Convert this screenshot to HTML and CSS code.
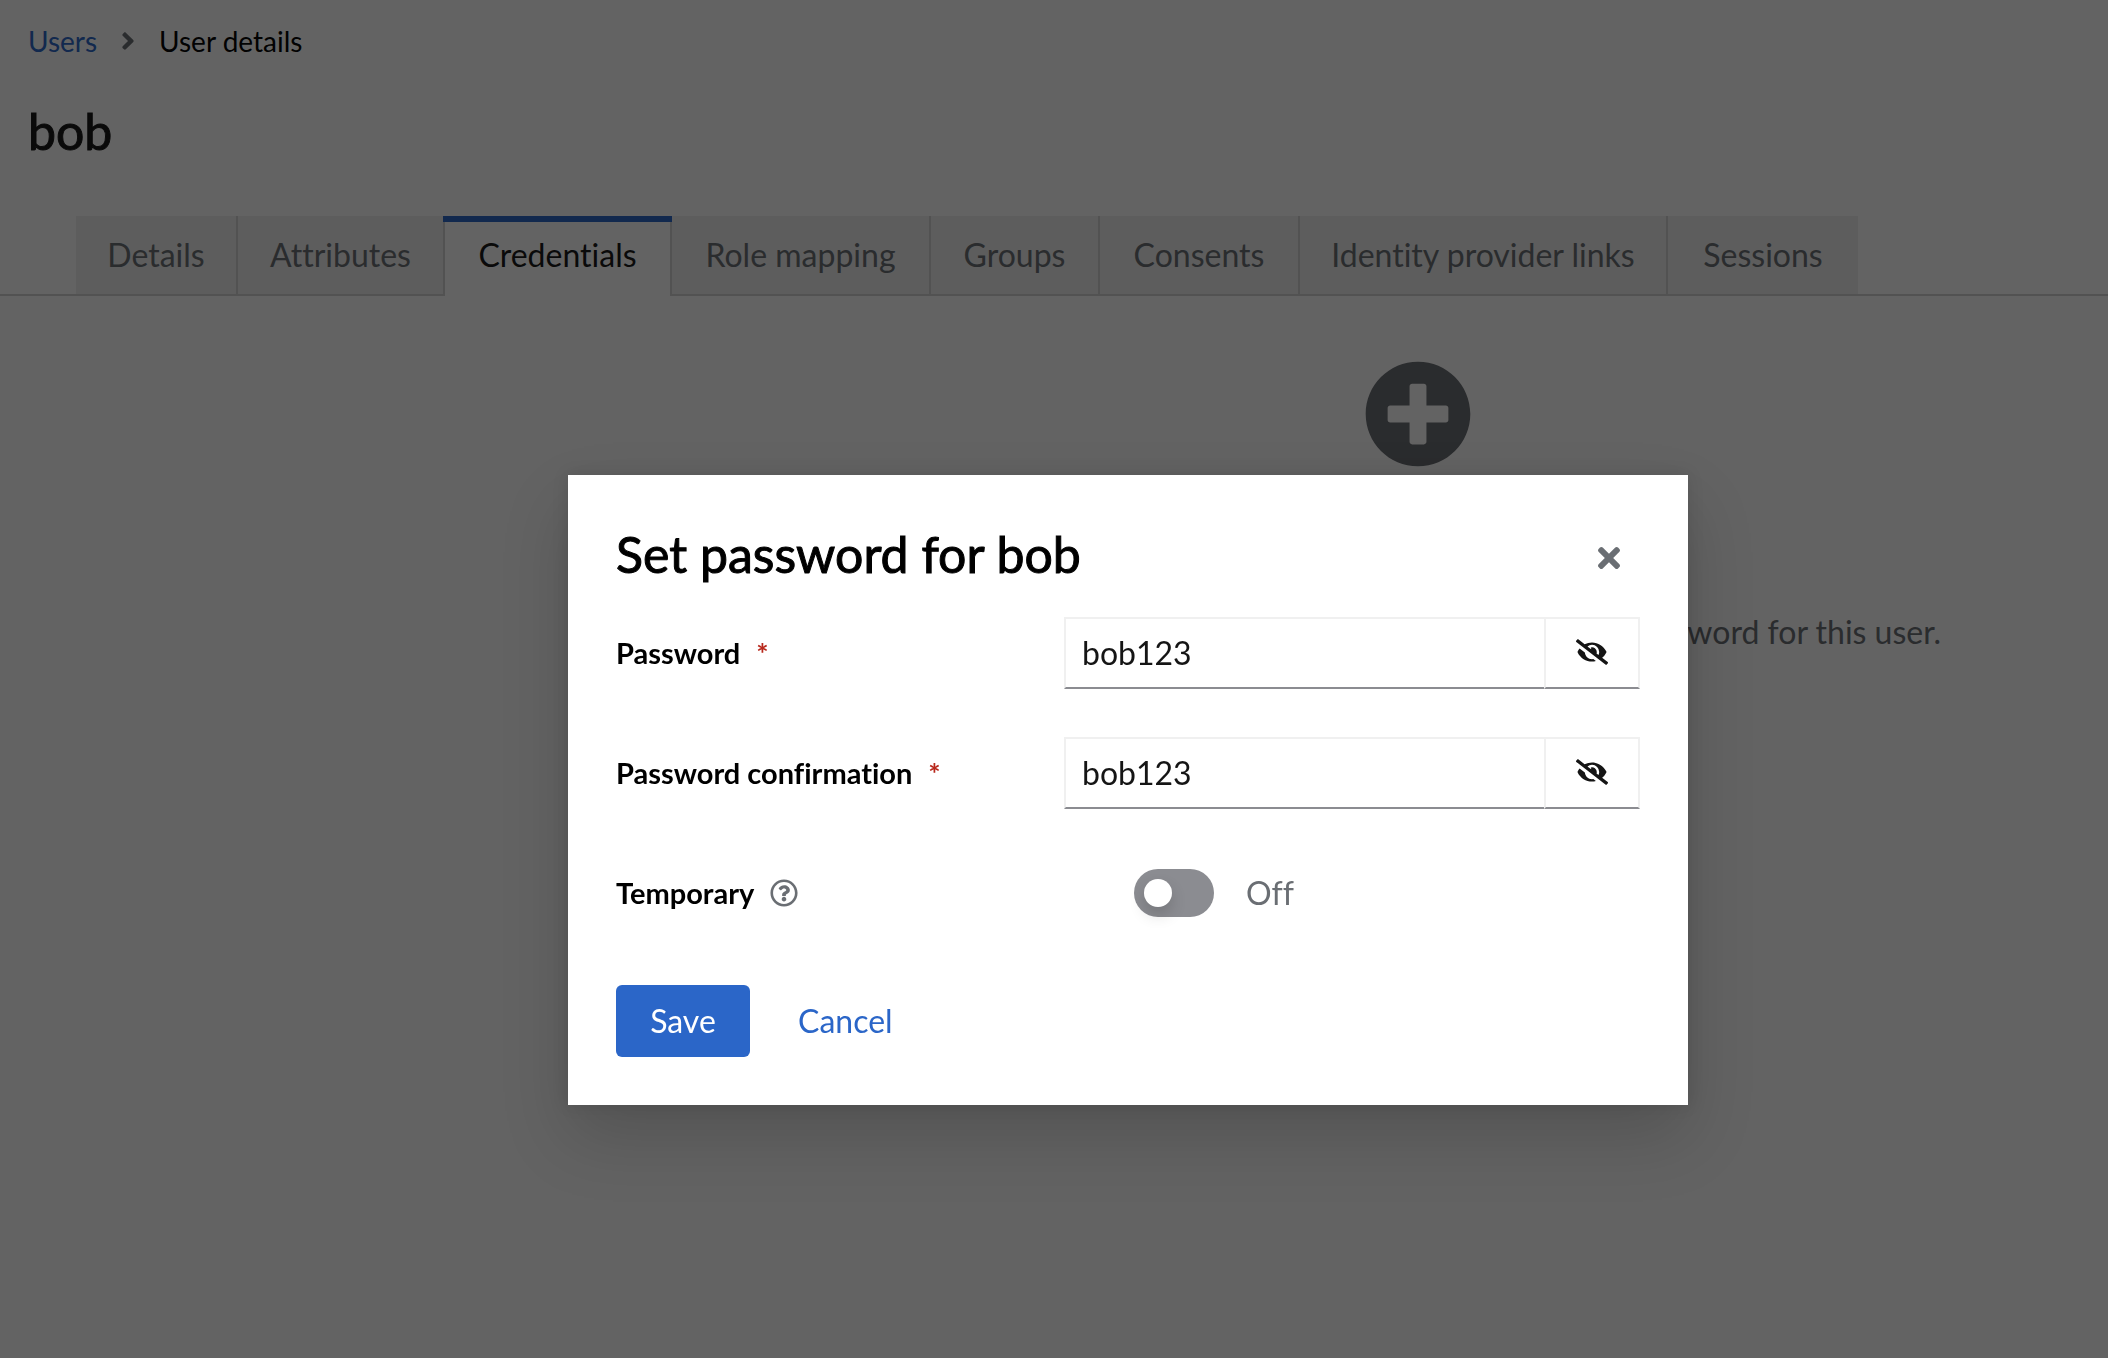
FILE: index.html
```html
<!DOCTYPE html>
<html lang="en">
<head>
<meta charset="utf-8">
<title>User details</title>
<link rel="stylesheet" href="styles.css">
</head>
<body>
<main class="page">
  <nav class="breadcrumb" aria-label="Breadcrumb">
    <a class="breadcrumb-link" href="#users">Users</a>
    <svg class="breadcrumb-divider" viewBox="0 0 256 512" aria-hidden="true"><path d="M224.3 273l-136 136c-9.4 9.4-24.6 9.4-33.9 0l-22.6-22.6c-9.4-9.4-9.4-24.6 0-33.9l96.4-96.4-96.4-96.4c-9.4-9.4-9.4-24.6 0-33.9L54.3 103c9.4-9.4 24.6-9.4 33.9 0l136 136c9.5 9.4 9.5 24.6.1 34z"/></svg>
    <span class="breadcrumb-current" aria-current="page">User details</span>
  </nav>
  <h1 class="page-title">bob</h1>
  <div class="tabs" role="tablist">
    <button class="tab" type="button" role="tab">Details</button>
    <button class="tab tab-before-current" type="button" role="tab">Attributes</button>
    <button class="tab tab-current" type="button" role="tab" aria-selected="true">Credentials</button>
    <button class="tab" type="button" role="tab">Role mapping</button>
    <button class="tab" type="button" role="tab">Groups</button>
    <button class="tab" type="button" role="tab">Consents</button>
    <button class="tab" type="button" role="tab">Identity provider links</button>
    <button class="tab tab-last" type="button" role="tab">Sessions</button>
  </div>
  <section class="empty-state">
    <svg class="empty-icon" viewBox="0 0 512 512" aria-hidden="true"><path d="M256 8C119 8 8 119 8 256s111 248 248 248 248-111 248-248S393 8 256 8zm144 276c0 6.6-5.4 12-12 12h-92v92c0 6.6-5.4 12-12 12h-56c-6.6 0-12-5.4-12-12v-92h-92c-6.6 0-12-5.4-12-12v-56c0-6.6 5.4-12 12-12h92v-92c0-6.6 5.4-12 12-12h56c6.6 0 12 5.4 12 12v92h92c6.6 0 12 5.4 12 12v56z"/></svg>
    <p class="empty-text">This user does not have any credentials. You can set password for this user.</p>
  </section>
</main>

<div class="backdrop">
  <div class="modal" role="dialog" aria-modal="true" aria-labelledby="modal-title">
    <header class="modal-header">
      <h2 class="modal-title" id="modal-title">Set password for bob</h2>
      <button class="close" type="button" aria-label="Close">
        <svg class="close-icon" viewBox="0 0 352 512" aria-hidden="true"><path d="M242.72 256l100.07-100.07c12.28-12.28 12.28-32.19 0-44.48l-22.24-22.24c-12.28-12.28-32.19-12.28-44.48 0L176 189.28 75.93 89.21c-12.28-12.28-32.19-12.28-44.48 0L9.21 111.45c-12.28 12.28-12.28 32.19 0 44.48L109.28 256 9.21 356.07c-12.28 12.28-12.28 32.19 0 44.48l22.24 22.24c12.28 12.28 32.2 12.28 44.48 0L176 322.72l100.07 100.07c12.28 12.28 32.2 12.28 44.48 0l22.24-22.24c12.28-12.28 12.28-32.19 0-44.48L242.72 256z"/></svg>
      </button>
    </header>
    <form class="form">
      <div class="row">
        <label class="label" for="password">Password<span class="required" aria-hidden="true">*</span></label>
        <div class="input-group">
          <input class="input" id="password" type="text" value="bob123" required>
          <button class="toggle-visibility" type="button" aria-label="Hide password">
            <svg class="eye" viewBox="0 0 640 512" aria-hidden="true"><path d="M320 400c-75.85 0-137.25-58.71-142.9-133.11L72.2 185.82c-13.79 17.3-26.48 35.59-36.72 55.59a32.35 32.35 0 0 0 0 29.19C89.71 376.41 197.07 448 320 448c26.91 0 52.87-4 77.89-10.46L346 397.39a144.13 144.13 0 0 1-26 2.61zm313.82 58.1l-110.55-85.44a331.25 331.25 0 0 0 81.25-102.07 32.35 32.35 0 0 0 0-29.19C550.29 135.59 442.93 64 320 64a308.15 308.15 0 0 0-147.32 37.7L45.46 3.37A16 16 0 0 0 23 6.18L3.37 31.45A16 16 0 0 0 6.18 53.9l588.36 454.73a16 16 0 0 0 22.46-2.81l19.64-25.27a16 16 0 0 0-2.82-22.45zm-183.72-142l-39.3-30.38A94.75 94.75 0 0 0 416 256a94.76 94.76 0 0 0-121.31-92.21A47.65 47.65 0 0 1 304 192a46.64 46.64 0 0 1-1.54 10l-73.61-56.89A142.31 142.31 0 0 1 320 112a143.92 143.92 0 0 1 144 144c0 21.63-5.29 41.79-13.9 60.11z"/></svg>
          </button>
        </div>
      </div>
      <div class="row">
        <label class="label" for="confirmation">Password confirmation<span class="required" aria-hidden="true">*</span></label>
        <div class="input-group">
          <input class="input" id="confirmation" type="text" value="bob123" required>
          <button class="toggle-visibility" type="button" aria-label="Hide password confirmation">
            <svg class="eye" viewBox="0 0 640 512" aria-hidden="true"><path d="M320 400c-75.85 0-137.25-58.71-142.9-133.11L72.2 185.82c-13.79 17.3-26.48 35.59-36.72 55.59a32.35 32.35 0 0 0 0 29.19C89.71 376.41 197.07 448 320 448c26.91 0 52.87-4 77.89-10.46L346 397.39a144.13 144.13 0 0 1-26 2.61zm313.82 58.1l-110.55-85.44a331.25 331.25 0 0 0 81.25-102.07 32.35 32.35 0 0 0 0-29.19C550.29 135.59 442.93 64 320 64a308.15 308.15 0 0 0-147.32 37.7L45.46 3.37A16 16 0 0 0 23 6.18L3.37 31.45A16 16 0 0 0 6.18 53.9l588.36 454.73a16 16 0 0 0 22.46-2.81l19.64-25.27a16 16 0 0 0-2.82-22.45zm-183.72-142l-39.3-30.38A94.75 94.75 0 0 0 416 256a94.76 94.76 0 0 0-121.31-92.21A47.65 47.65 0 0 1 304 192a46.64 46.64 0 0 1-1.54 10l-73.61-56.89A142.31 142.31 0 0 1 320 112a143.92 143.92 0 0 1 144 144c0 21.63-5.29 41.79-13.9 60.11z"/></svg>
          </button>
        </div>
      </div>
      <div class="row">
        <div class="label-with-help">
          <label class="label" for="temporary">Temporary</label>
          <button class="help" type="button" aria-label="Help for Temporary">
            <svg class="help-icon" viewBox="0 0 512 512" aria-hidden="true"><path d="M256 8C119.043 8 8 119.083 8 256c0 136.997 111.043 248 248 248s248-111.003 248-248C504 119.083 392.957 8 256 8zm0 448c-110.532 0-200-89.431-200-200 0-110.495 89.472-200 200-200 110.491 0 200 89.471 200 200 0 110.53-89.431 200-200 200zm107.244-255.2c0 67.052-72.421 68.084-72.421 92.863V300c0 6.627-5.373 12-12 12h-45.647c-6.627 0-12-5.373-12-12v-8.659c0-35.745 27.1-50.034 47.579-61.516 17.561-9.845 28.324-16.541 28.324-29.579 0-17.246-21.999-28.693-39.784-28.693-23.189 0-33.894 10.977-48.942 29.969-4.057 5.12-11.46 6.071-16.666 2.124l-27.824-21.098c-5.107-3.872-6.251-11.066-2.644-16.363C184.846 131.491 214.94 112 261.794 112c49.071 0 101.45 38.304 101.45 88.8zM298 368c0 23.159-18.841 42-42 42s-42-18.841-42-42 18.841-42 42-42 42 18.841 42 42z"/></svg>
          </button>
        </div>
        <div class="switch-field">
          <input class="switch" id="temporary" type="checkbox" role="switch">
          <span class="switch-state">Off</span>
        </div>
      </div>
      <div class="actions">
        <button class="button button-primary" type="button">Save</button>
        <button class="button button-link" type="button">Cancel</button>
      </div>
    </form>
  </div>
</div>
</body>
</html>
```
FILE: styles.css
```css
:root {
  --text: #151515;
  --muted: #6a6e73;
  --blue: #2b66c8;
  --line: #d2d2d2;
  --soft: #f0f0f0;
  --field-line: #8b8c91;
}

* {
  box-sizing: border-box;
}

body {
  margin: 0;
  min-height: 100vh;
  background: #fff;
  color: var(--text);
  font-family: Lato, "Liberation Sans", sans-serif;
  font-size: 32px;
  font-variant-ligatures: none;
  line-height: 48px;
}

button,
input {
  margin: 0;
  padding: 0;
  border: 0;
  border-radius: 0;
  background: none;
  color: inherit;
  font: inherit;
  font-variant-ligatures: none;
}

svg {
  display: block;
  fill: currentColor;
}

.breadcrumb {
  display: flex;
  align-items: center;
  gap: 24px;
  padding: 20px 28px 0;
  font-size: 28px;
  line-height: 42px;
}

.breadcrumb-link {
  color: var(--blue);
  text-decoration: none;
}

.breadcrumb-current {
  color: #000;
}

.breadcrumb-divider {
  width: 14px;
  height: 28px;
  color: var(--muted);
}

.page-title,
.modal-title {
  font-size: 50px;
  font-weight: 400;
  line-height: 62px;
  -webkit-text-stroke: 1px currentColor;
}

.page-title {
  margin: 38px 28px 54px;
}

.tabs {
  display: grid;
  grid-template-columns: 162px 205px 229px 259px 169px 200px 368px 190px;
  grid-template-rows: 78px;
  padding-left: 76px;
  border-bottom: 2px solid var(--line);
}

.tab {
  border-right: 2px solid var(--line);
  background: var(--soft);
  color: var(--muted);
  white-space: nowrap;
}

.tab-current {
  height: 80px;
  padding-bottom: 2px;
  border: 0;
  background: #fff;
  box-shadow: inset 0 6px var(--blue), inset 2px 0 var(--line), inset -2px 0 var(--line);
  color: var(--text);
}

.tab-before-current,
.tab-last {
  border-right: 0;
}

.empty-state {
  display: flex;
  flex-direction: column;
  align-items: center;
  gap: 140px;
  margin-left: 728px;
  padding-top: 64px;
  color: var(--muted);
}

.empty-icon {
  width: 108px;
  height: 108px;
}

.empty-text {
  margin: 0;
  white-space: nowrap;
}

.backdrop {
  position: fixed;
  inset: 0;
  display: flex;
  align-items: center;
  justify-content: center;
  padding: 222px 0 0 148px;
  background: rgba(3, 3, 3, 0.62);
}

.modal {
  width: 1120px;
  padding: 48px;
  background: #fff;
  box-shadow: 0 32px 64px rgba(3, 3, 3, 0.16), 0 0 16px rgba(3, 3, 3, 0.1);
}

.modal-header {
  display: flex;
  align-items: flex-start;
  justify-content: space-between;
  margin-bottom: 24px;
  height: 70px;
}

.modal-title {
  margin: 0;
  color: #000;
}

.close {
  padding: 19px 20px;
  color: var(--muted);
}

.close-icon {
  width: 22px;
  height: 32px;
}

.form {
  display: grid;
  gap: 48px;
}

.row {
  display: grid;
  grid-template-columns: 448px 1fr;
  align-items: center;
  min-height: 72px;
}

.label {
  color: #000;
  font-size: 29px;
  font-weight: 700;
  line-height: 36px;
}

.required {
  margin-left: 16px;
  color: #b8281c;
}

.input-group {
  display: flex;
  height: 72px;
}

.input {
  flex: 1;
  min-width: 0;
  padding: 0 16px;
  border: 2px solid var(--soft);
  border-right: 0;
  border-bottom-color: var(--field-line);
}

.toggle-visibility {
  display: grid;
  place-items: center;
  width: 96px;
  padding-bottom: 2px;
  border: 2px solid var(--soft);
  border-bottom-color: var(--field-line);
}

.eye {
  width: 32px;
  height: 26px;
}

.label-with-help {
  display: flex;
  align-items: center;
  gap: 16px;
}

.help {
  color: var(--muted);
}

.help-icon {
  width: 28px;
  height: 28px;
}

.switch-field {
  display: flex;
  align-items: center;
  gap: 32px;
  padding-left: 70px;
}

.switch {
  appearance: none;
  display: flex;
  align-items: center;
  width: 80px;
  height: 48px;
  padding: 0 10px;
  border-radius: 24px;
  background: var(--field-line);
}

.switch::before {
  content: "";
  width: 28px;
  height: 28px;
  border-radius: 50%;
  background: #fff;
  box-shadow: 0 8px 16px rgba(3, 3, 3, 0.16);
}

.switch-state {
  color: var(--muted);
}

.actions {
  display: flex;
  gap: 16px;
  padding-top: 8px;
}

.button {
  min-width: 134px;
  height: 72px;
  padding: 0 32px;
  border-radius: 6px;
}

.button-primary {
  background: var(--blue);
  color: #fff;
}

.button-link {
  color: var(--blue);
}
```
